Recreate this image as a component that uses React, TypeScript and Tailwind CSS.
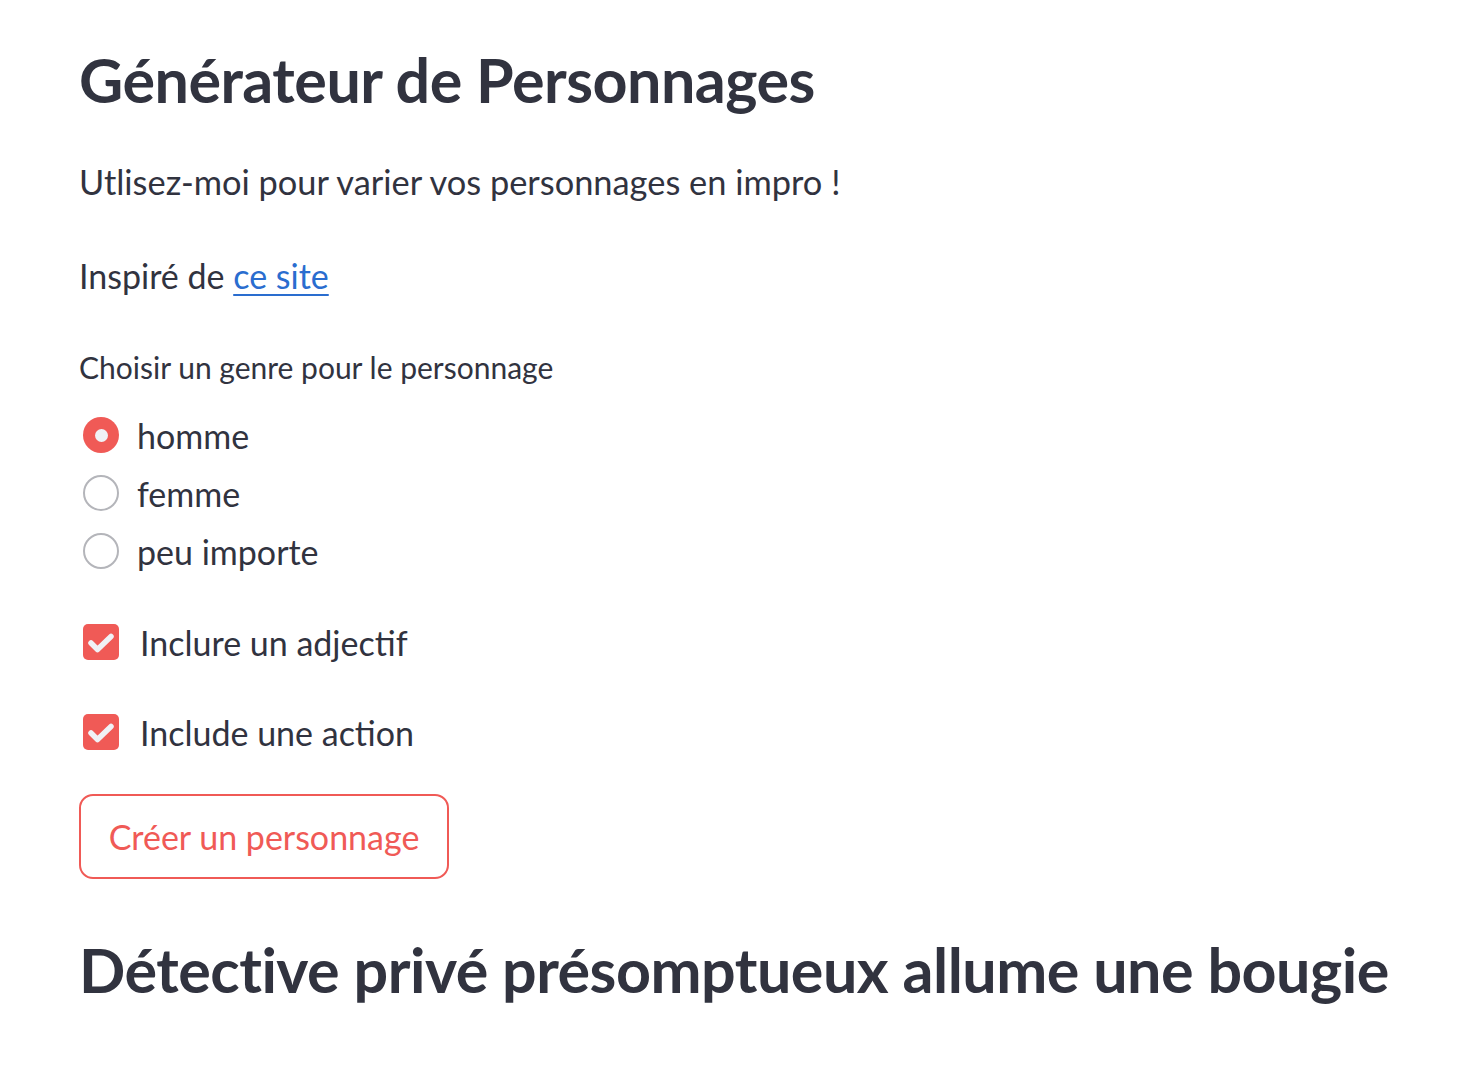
import { useState, type FC } from 'react';

const font = { fontFamily: '"Source Sans Pro", Lato, "Noto Sans", sans-serif' };

const Radio: FC<{ checked: boolean; label: string; onClick: () => void }> = ({ checked, label, onClick }) => (
	<div onClick={onClick} className="flex items-center h-[58px] cursor-pointer">
		<div className="w-[44px] flex justify-center">
			{checked ? (
				<span className="w-[36px] h-[36px] rounded-full bg-[#f05a56] flex items-center justify-center">
					<span className="w-[13px] h-[13px] rounded-full bg-[#f0f2f6]" />
				</span>
			) : (
				<span className="w-[36px] h-[36px] rounded-full border-2 border-[#b4b5ba] bg-white" />
			)}
		</div>
		<span className="ml-[14px] text-[34px] text-[#31333f]">{label}</span>
	</div>
);

const Checkbox: FC<{ checked: boolean; label: string; onClick: () => void }> = ({ checked, label, onClick }) => (
	<div onClick={onClick} className="flex items-center h-[58px] cursor-pointer">
		<div className="w-[44px] flex justify-center">
			<span
				className={`w-[36px] h-[36px] rounded-[5px] flex items-center justify-center ${
					checked ? 'bg-[#f05a56]' : 'border-2 border-[#b4b5ba] bg-white'
				}`}
			>
				{checked && (
					<svg width="36" height="36" viewBox="0 0 36 36">
						<path d="M8 19 L14.5 25.5 L28 12.5" fill="none" stroke="#f0f2f6" strokeWidth="5.5" strokeLinecap="round" strokeLinejoin="round" />
					</svg>
				)}
			</span>
		</div>
		<span className="ml-[17px] text-[34px] text-[#31333f]">{label}</span>
	</div>
);

const genres = ['homme', 'femme', 'peu importe'];

export default function App() {
	const [genre, setGenre] = useState('homme');
	const [adjectif, setAdjectif] = useState(true);
	const [action, setAction] = useState(true);

	return (
		<div style={font} className="min-h-screen bg-white pl-[79px] pt-[40px] text-[#31333f]">
			<h1 className="h-[80px] flex items-center text-[61px] font-bold tracking-[-0.5px]">Générateur de Personnages</h1>

			<p className="mt-[30px] h-[64px] flex items-center text-[34.4px]">Utlisez-moi pour varier vos personnages en impro !</p>

			<p className="mt-[29px] h-[64px] flex items-center text-[34px]">
				Inspiré de&nbsp;
				<a href="#" className="text-[#2a6dcf] underline decoration-2 underline-offset-[5px]">
					ce site
				</a>
			</p>

			<div className="mt-[40px] h-[40px] flex items-center text-[30px]">Choisir un genre pour le personnage</div>

			<div className="mt-[19px] flex flex-col">
				{genres.map((g) => (
					<Radio key={g} label={g} checked={genre === g} onClick={() => setGenre(g)} />
				))}
			</div>

			<div className="mt-[33px]">
				<Checkbox label="Inclure un adjectif" checked={adjectif} onClick={() => setAdjectif(!adjectif)} />
			</div>
			<div className="mt-[32px]">
				<Checkbox label="Include une action" checked={action} onClick={() => setAction(!action)} />
			</div>

			<button className="mt-[33px] w-[370px] h-[85px] rounded-[14px] border-2 border-[#f05a56] bg-white text-[34px] text-[#f05a56] flex items-center justify-center">
				Créer un personnage
			</button>

			<h2 className="mt-[51px] h-[80px] flex items-center text-[61px] font-bold tracking-[-0.5px]">
				Détective privé présomptueux allume une bougie
			</h2>
		</div>
	);
}
